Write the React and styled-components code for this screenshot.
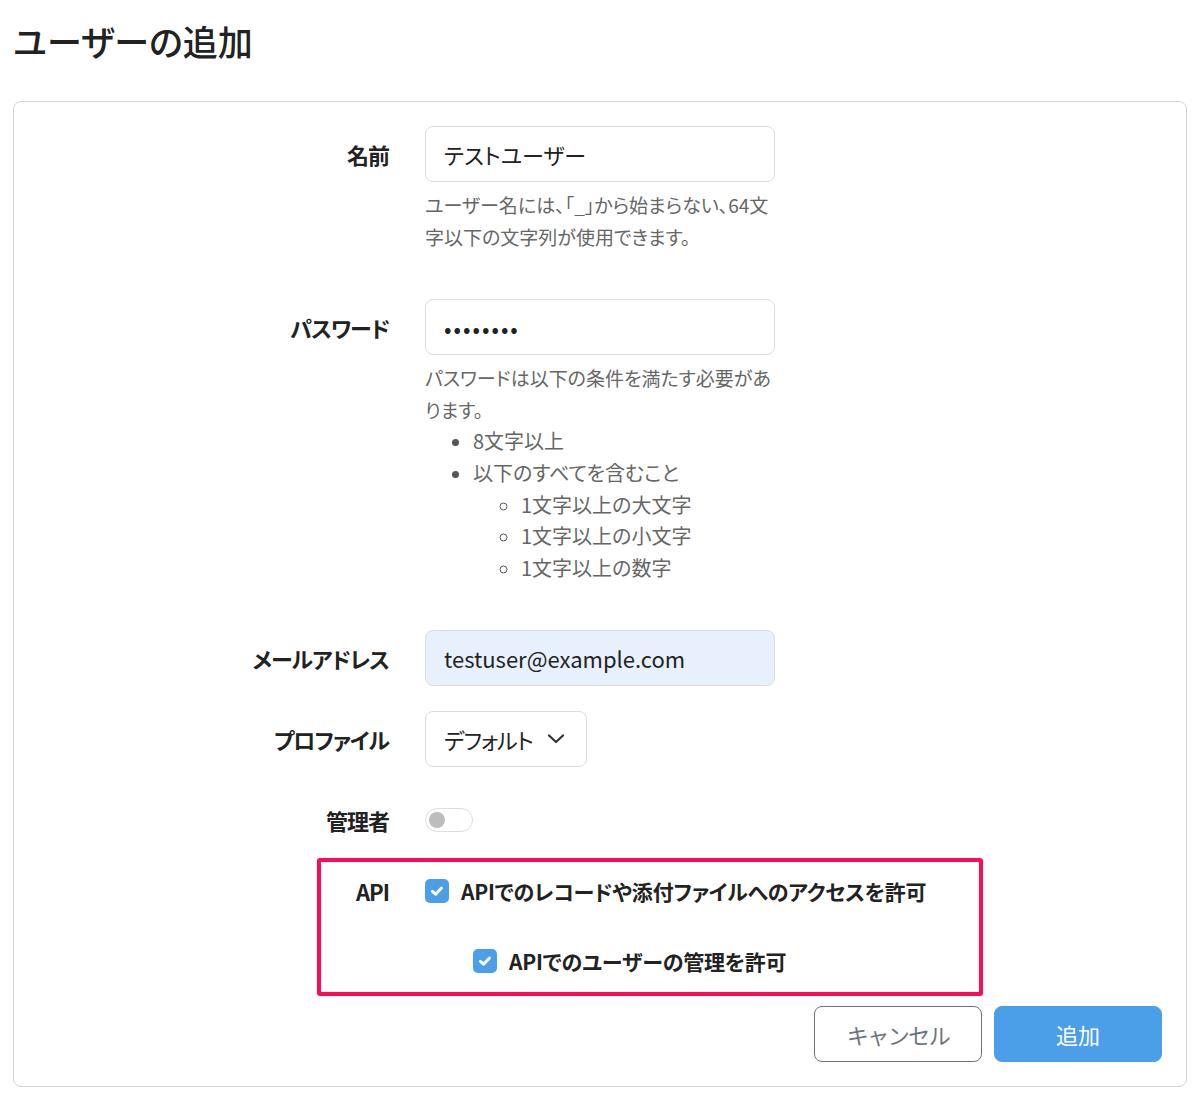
import styled, { createGlobalStyle } from 'styled-components';

const GlobalStyle = createGlobalStyle`
    body {
        margin: 0;
        background: #fff;
        color: #212529;
        font-family: "Noto Sans CJK JP", "Noto Sans", sans-serif;
        font-feature-settings: "palt";
    }
`;

const Page = styled.div`
    padding: 17px 10px 10px 13px;
`;

const Title = styled.h1`
    margin: 0 0 36px 0;
    font-size: 35px;
    line-height: 48px;
    font-weight: 500;
    color: #222;
`;

const Card = styled.form`
    border: 1px solid #d4d4d4;
    border-radius: 8px;
    padding: 24px;
`;

const Row = styled.div`
    display: flex;
    align-items: flex-start;
    gap: 36px;
    margin-bottom: ${p => p.$gap ?? 25}px;
    position: relative;
`;

const Label = styled.div`
    width: 351px;
    flex: none;
    text-align: right;
    font-size: 22px;
    font-weight: 700;
    letter-spacing: -1px;
    line-height: ${p => p.$h ?? 56}px;
    color: #222;
`;

const Control = styled.div`
    display: flex;
    flex-direction: column;
    width: 350px;
`;

const Input = styled.input`
    box-sizing: border-box;
    width: 350px;
    height: 56px;
    padding: 0 18px;
    border: 1px solid #dcdde3;
    border-radius: 8px;
    background: ${p => p.$filled ? '#e8f0fe' : '#fff'};
    font-family: inherit;
    font-feature-settings: "palt";
    font-size: 22px;
    color: #222;
    letter-spacing: ${p => p.type === 'password' ? '2px' : 'normal'};
    &:focus { outline: none; }
`;

const Help = styled.div`
    margin: 7px 0 22px 0;
    font-size: 19px;
    line-height: 31.6px;
    color: #666;
`;

const List = styled.ul`
    margin: 0;
    padding-left: 48px;
    list-style: ${p => p.$nested ? 'circle' : 'disc'};
    font-size: 20px;
    & li::marker { color: #555; font-size: 19px; }
`;

const SelectBox = styled.div`
    box-sizing: border-box;
    display: flex;
    align-items: center;
    gap: 14px;
    height: 56px;
    padding: 0 21px 0 18px;
    border: 1px solid #dcdde3;
    border-radius: 8px;
    font-size: 22px;
    letter-spacing: -1px;
    color: #222;
    width: fit-content;
`;

const Toggle = styled.div`
    box-sizing: border-box;
    width: 48px;
    height: 24px;
    margin-top: 16px;
    border: 1px solid #dedede;
    border-radius: 12px;
    padding: 3px;
    &::after {
        content: '';
        display: block;
        width: 16px;
        height: 16px;
        border-radius: 50%;
        background: #bdbdbd;
    }
`;

const Highlight = styled.div`
    position: absolute;
    left: 279px;
    top: -15px;
    width: 666px;
    height: 138px;
    box-sizing: border-box;
    border: 4px solid #ff0a54;
    border-radius: 3px;
    pointer-events: none;
`;

const Checks = styled.div`
    display: flex;
    flex-direction: column;
    gap: 34px;
`;

const CheckRow = styled.label`
    display: flex;
    align-items: center;
    gap: 12px;
    height: 36px;
    margin-left: ${p => p.$indent ? 48 : 0}px;
    font-size: 21px;
    font-weight: 700;
    letter-spacing: -0.2px;
    color: #222;
`;

const Box = styled.span`
    width: 24px;
    height: 24px;
    border-radius: 5px;
    background: #4a9fe8;
    display: flex;
    align-items: center;
    justify-content: center;
    flex: none;
`;

const Actions = styled.div`
    display: flex;
    justify-content: flex-end;
    gap: 12px;
    margin-top: 27px;
`;

const Button = styled.button`
    width: 168px;
    height: 56px;
    border-radius: 8px;
    font-family: inherit;
    font-size: 22px;
    letter-spacing: ${p => p.$primary ? '0' : '-1.5px'};
    border: 1px solid ${p => p.$primary ? '#4a9fe8' : '#6c757d'};
    background: ${p => p.$primary ? '#4a9fe8' : '#fff'};
    color: ${p => p.$primary ? '#fff' : '#6c757d'};
`;

const Check = ({ children, indent }) => (
    <CheckRow $indent={indent}>
        <Box>
            <svg width="16" height="16" viewBox="0 0 16 16" fill="none">
                <path d="M3.5 8.3 L6.6 11.2 L12.5 5" stroke="#fff" strokeWidth="3" strokeLinecap="round" strokeLinejoin="round" />
            </svg>
        </Box>
        {children}
    </CheckRow>
);

const Chevron = () => (
    <svg width="18" height="10" viewBox="0 0 18 10" fill="none">
        <path d="M2 1.5 L9 8 L16 1.5" stroke="#333" strokeWidth="2.2" strokeLinecap="round" strokeLinejoin="round" />
    </svg>
);

const App = () => {
    return (
        <>
            <GlobalStyle />
            <Page>
                <Title>ユーザーの追加</Title>
                <Card onSubmit={e => e.preventDefault()}>
                    <Row>
                        <Label>名前</Label>
                        <Control>
                            <Input type='text' defaultValue='テストユーザー' />
                            <Help>ユーザー名には、「_」から始まらない、64文字以下の文字列が使用できます。</Help>
                        </Control>
                    </Row>
                    <Row>
                        <Label>パスワード</Label>
                        <Control>
                            <Input type='password' defaultValue='password' />
                            <Help>
                                パスワードは以下の条件を満たす必要があります。
                                <List>
                                    <li>8文字以上</li>
                                    <li>
                                        以下のすべてを含むこと
                                        <List $nested>
                                            <li>1文字以上の大文字</li>
                                            <li>1文字以上の小文字</li>
                                            <li>1文字以上の数字</li>
                                        </List>
                                    </li>
                                </List>
                            </Help>
                        </Control>
                    </Row>
                    <Row>
                        <Label>メールアドレス</Label>
                        <Control>
                            <Input type='email' $filled defaultValue='testuser@example.com' />
                        </Control>
                    </Row>
                    <Row>
                        <Label>プロファイル</Label>
                        <SelectBox>
                            デフォルト
                            <Chevron />
                        </SelectBox>
                    </Row>
                    <Row>
                        <Label>管理者</Label>
                        <Toggle />
                    </Row>
                    <Row $gap={0}>
                        <Highlight />
                        <Label $h={36}>API</Label>
                        <Checks>
                            <Check>APIでのレコードや添付ファイルへのアクセスを許可</Check>
                            <Check indent>APIでのユーザーの管理を許可</Check>
                        </Checks>
                    </Row>
                    <Actions>
                        <Button type='button'>キャンセル</Button>
                        <Button type='submit' $primary>追加</Button>
                    </Actions>
                </Card>
            </Page>
        </>
    );
};

export default App;
